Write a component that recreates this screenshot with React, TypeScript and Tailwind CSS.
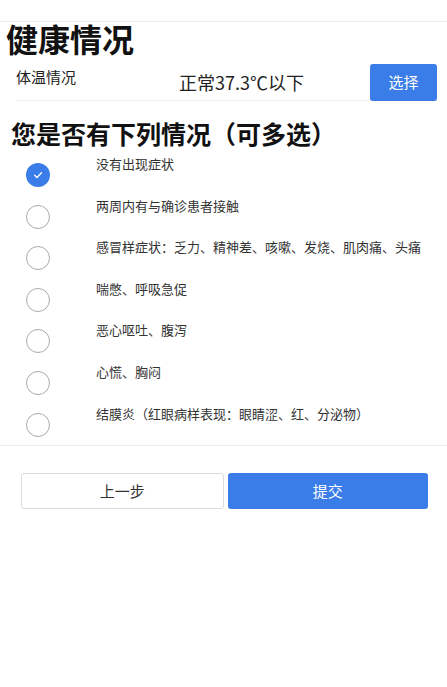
import React from "react";

const options = [
  "没有出现症状",
  "两周内有与确诊患者接触",
  "感冒样症状：乏力、精神差、咳嗽、发烧、肌肉痛、头痛",
  "喘憋、呼吸急促",
  "恶心呕吐、腹泻",
  "心慌、胸闷",
  "结膜炎（红眼病样表现：眼睛涩、红、分泌物）",
];

function Check() {
  return (
    <svg width="12" height="12" viewBox="0 0 12 12" fill="none">
      <path d="M2.6 6.2 L5 8.5 L9.5 3.8" stroke="white" strokeWidth="1.3" strokeLinecap="round" strokeLinejoin="round" />
    </svg>
  );
}

export default function App() {
  return (
    <div
      className="w-[447px] min-h-[687px] bg-white text-black"
      style={{ fontFamily: '"Noto Sans CJK SC", "Noto Sans", sans-serif' }}
    >
      <div className="h-[21px]" />
      <div className="border-t border-[#ececec]" />
      <h1 className="pl-[6px] text-[32px] leading-[32px] font-bold text-[#111]">健康情况</h1>

      <div className="ml-4 mr-[10px] mt-[10px] flex h-[37px] items-center border-b border-[#efefef]">
        <div className="self-start mt-[3px] w-[90px] text-[15px] leading-[20px] text-[#222]">体温情况</div>
        <div className="flex-1 pl-[73px] text-[18px] leading-[24px] text-[#222]">正常37.3℃以下</div>
        <button className="h-[37px] w-[67px] rounded-[3px] bg-[#3a7de8] text-[15px] text-white">选择</button>
      </div>

      <h2 className="mt-[19px] pl-[11px] text-[25px] leading-[26px] font-bold text-[#111]">
        您是否有下列情况（可多选）
      </h2>

      <div className="mt-[8px] border-b border-[#ececec]">
        {options.map((t, i) => (
          <div key={i} className="flex h-[41.6px] items-start">
            <div
              className={
                i === 0
                  ? "ml-[26px] mt-[9px] flex h-[24px] w-[24px] items-center justify-center rounded-full bg-[#3a7de8]"
                  : "ml-[26px] mt-[9px] h-[24px] w-[24px] rounded-full border border-[#a9a9a9]"
              }
            >
              {i === 0 ? <Check /> : null}
            </div>
            <div className="ml-[46px] text-[13px] leading-[19px] text-[#333]">{t}</div>
          </div>
        ))}
      </div>

      <div className="mt-[27px] flex gap-[4px] pl-[21px] pr-[19px]">
        <button className="h-[36px] flex-1 rounded-[3px] border border-[#dcdcdc] bg-white text-[15px] text-[#333]">
          上一步
        </button>
        <button className="h-[36px] flex-1 rounded-[3px] bg-[#3a7de8] text-[15px] text-white">提交</button>
      </div>
    </div>
  );
}
